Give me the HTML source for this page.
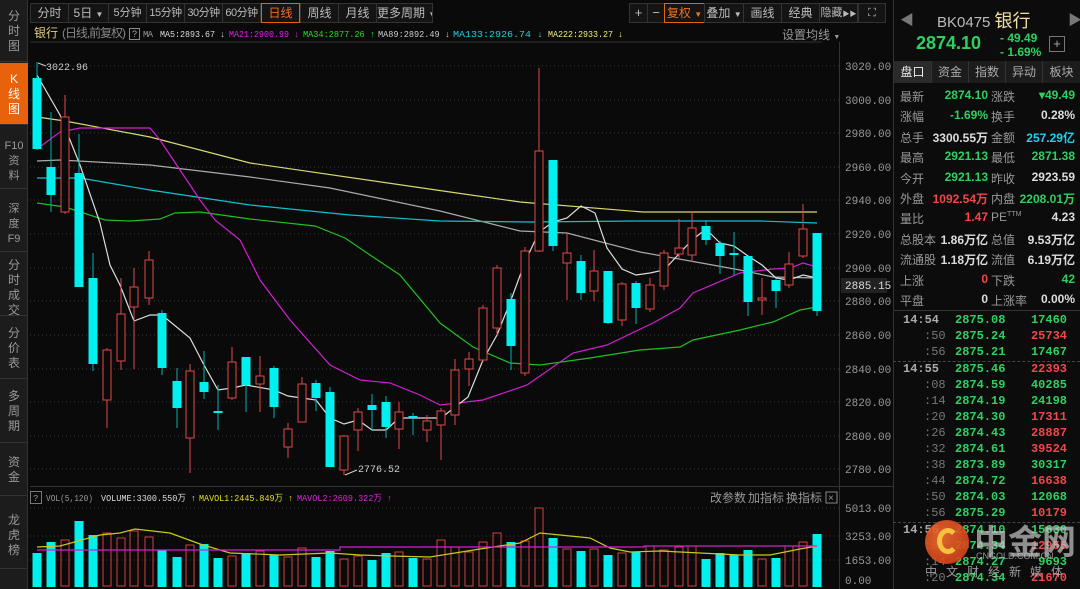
<!DOCTYPE html>
<html><head><meta charset="utf-8"><style>
*{margin:0;padding:0;box-sizing:border-box}
body{width:1080px;height:589px;background:#0a0a0a;overflow:hidden;position:relative;font-family:"Liberation Sans","Noto Sans CJK SC",sans-serif;color:#aaa}
.side{position:absolute;left:0;top:0;width:28px;height:589px;background:#1c1c1c;border-right:1px solid #333}
.side div{position:absolute;left:0;width:28px;text-align:center;font-size:12px;line-height:15px;color:#999;border-bottom:1px solid #333}
.tb{position:absolute;top:3px;height:20px;border:1px solid #333;background:#141414;font-size:11px;line-height:18px;text-align:center;color:#bbb;white-space:nowrap;overflow:hidden}
.rp{position:absolute;left:893px;top:0;width:187px;height:589px;background:#0c0c0c;border-left:1px solid #333}
.row{position:absolute;left:900px;width:175px;font-size:12px;height:20px}
.row span{position:absolute}
.tk{position:absolute;left:897px;width:178px;font-size:12px;font-family:"Liberation Mono",monospace;font-weight:bold}
.tk span{position:absolute}
</style></head><body>
<div class="side">
<div style="top:0;height:62px;padding-top:9px">分<br>时<br>图</div>
<div style="top:63px;height:62px;padding-top:9px;background:#e8620c;color:#fff">K<br>线<br>图</div>
<div style="top:126px;height:63px;padding-top:13px;font-size:11px">F10<br>资<br>料</div>
<div style="top:190px;height:62px;padding-top:12px;font-size:11px">深<br>度<br>F9</div>
<div style="top:253px;height:63px;padding-top:5px">分<br>时<br>成<br>交</div>
<div style="top:317px;height:62px;padding-top:9px">分<br>价<br>表</div>
<div style="top:380px;height:63px;padding-top:9px">多<br>周<br>期</div>
<div style="top:444px;height:52px;padding-top:11px">资<br>金</div>
<div style="top:497px;height:72px;padding-top:16px">龙<br>虎<br>榜</div>
</div>
<div class="tb" style="left:30px;width:39px;font-size:12px">分时</div>
<div class="tb" style="left:68px;width:41px;font-size:12px">5日 <span style="font-size:8px">▼</span></div>
<div class="tb" style="left:108px;width:39px">5分钟</div>
<div class="tb" style="left:146px;width:39px;letter-spacing:-0.5px">15分钟</div>
<div class="tb" style="left:184px;width:39px;letter-spacing:-0.5px">30分钟</div>
<div class="tb" style="left:222px;width:39px;letter-spacing:-0.5px">60分钟</div>
<div class="tb" style="left:261px;width:39px;font-size:12px;border-color:#e8620c;color:#f07020">日线</div>
<div class="tb" style="left:300px;width:39px;font-size:12px">周线</div>
<div class="tb" style="left:338px;width:39px;font-size:12px">月线</div>
<div class="tb" style="left:376px;width:57px;font-size:12px">更多周期 <span style="font-size:8px">▼</span></div>
<div class="tb" style="left:629px;width:19px;font-size:13px">+</div>
<div class="tb" style="left:647px;width:18px;font-size:13px">−</div>
<div class="tb" style="left:664px;width:41px;font-size:12px;border-color:#e8620c;color:#f07020">复权 <span style="font-size:8px">▼</span></div>
<div class="tb" style="left:704px;width:40px;font-size:12px">叠加 <span style="font-size:8px">▼</span></div>
<div class="tb" style="left:743px;width:39px;font-size:12px">画线</div>
<div class="tb" style="left:781px;width:39px;font-size:12px">经典</div>
<div class="tb" style="left:819px;width:39px">隐藏<span style="font-size:7px">▶▶</span></div>
<div class="tb" style="left:858px;width:28px">⛶</div>
<div style="position:absolute;left:782px;top:26px;font-size:12px;color:#999">设置均线 <span style="font-size:7px">▼</span></div>
<svg style="position:absolute;left:0;top:0" width="893" height="589">
<text x="34" y="37" font-size="12" fill="#e0d080" font-family="Liberation Sans,Noto Sans CJK SC">银行</text>
<text x="62" y="37" font-size="12" fill="#888" font-family="Liberation Sans,Noto Sans CJK SC" textLength="64">(日线,前复权)</text>
<rect x="129.5" y="28.5" width="10" height="11" fill="none" stroke="#888"/><text x="132" y="37" font-size="9" fill="#aaa">?</text>
<g font-family="Liberation Mono" font-size="9" lengthAdjust="spacingAndGlyphs">
<text x="143" y="37" fill="#999" textLength="10">MA</text>
<text x="160" y="37" fill="#ddd" textLength="65" lengthAdjust="spacingAndGlyphs">MA5:2893.67 ↓</text>
<text x="229" y="37" fill="#e020e0" textLength="70" lengthAdjust="spacingAndGlyphs">MA21:2900.99 ↓</text>
<text x="303" y="37" fill="#20e020" textLength="72" lengthAdjust="spacingAndGlyphs">MA34:2877.26 ↑</text>
<text x="378" y="37" fill="#ccc" textLength="72" lengthAdjust="spacingAndGlyphs">MA89:2892.49 ↓</text>
<text x="453" y="37" fill="#20d0e0" textLength="90" lengthAdjust="spacingAndGlyphs">MA133:2926.74 ↓</text>
<text x="548" y="37" fill="#f0f080" textLength="75" lengthAdjust="spacingAndGlyphs">MA222:2933.27 ↓</text>
</g>
<line x1="30" y1="42" x2="822" y2="42" stroke="#333"/>
<line x1="839.5" y1="42" x2="839.5" y2="589" stroke="#333"/>
<line x1="30" y1="486.5" x2="893" y2="486.5" stroke="#333"/>
<g stroke="#3a3a3a" stroke-dasharray="1,3">
<line x1="30" y1="66" x2="839" y2="66"/><line x1="30" y1="100" x2="839" y2="100"/><line x1="30" y1="133" x2="839" y2="133"/><line x1="30" y1="167" x2="839" y2="167"/><line x1="30" y1="200" x2="839" y2="200"/><line x1="30" y1="234" x2="839" y2="234"/><line x1="30" y1="268" x2="839" y2="268"/><line x1="30" y1="301" x2="839" y2="301"/><line x1="30" y1="335" x2="839" y2="335"/><line x1="30" y1="369" x2="839" y2="369"/><line x1="30" y1="402" x2="839" y2="402"/><line x1="30" y1="436" x2="839" y2="436"/><line x1="30" y1="469" x2="839" y2="469"/>
<line x1="30" y1="508" x2="839" y2="508"/><line x1="30" y1="536" x2="839" y2="536"/><line x1="30" y1="560" x2="839" y2="560"/>
</g>
<g font-family="Liberation Mono" font-size="11" fill="#999">
<text x="845" y="70">3020.00</text><text x="845" y="104">3000.00</text><text x="845" y="137">2980.00</text><text x="845" y="171">2960.00</text><text x="845" y="204">2940.00</text><text x="845" y="238">2920.00</text><text x="845" y="272">2900.00</text><text x="845" y="305">2880.00</text><text x="845" y="339">2860.00</text><text x="845" y="373">2840.00</text><text x="845" y="406">2820.00</text><text x="845" y="440">2800.00</text><text x="845" y="473">2780.00</text>
<text x="845" y="512">5013.00</text><text x="845" y="540">3253.00</text><text x="845" y="564">1653.00</text><text x="845" y="584">0.00</text>
</g>
<rect x="841" y="278" width="46" height="15" fill="#222"/>
<text x="845" y="289" font-family="Liberation Mono" font-size="11" fill="#ddd">2885.15</text>
<g fill="none" stroke-width="1.2">
<polyline stroke="#d8d870" points="37,117 65,121 150,137 250,163 450,192 520,202 643,212 817,212"/>
<polyline stroke="#aaa" points="37,161 60,160 150,165 250,177 330,188 440,211 520,231 567,233 640,252 707,264 740,270 773,277 817,278"/>
<polyline stroke="#10c0d0" points="37,178 80,178 150,190 250,205 350,215 440,221 530,222 640,221 760,221 817,223"/>
<polyline stroke="#20c020" points="37,203 65,207 105,220 130,221 160,219 175,213 200,212 250,219 315,226 345,238 370,255 400,275 440,323 473,347 510,363 540,365 590,358 640,350 680,347 693,340 740,330 773,322 800,310 817,307"/>
<polyline stroke="#d020d0" points="37,149 60,132 80,128 150,128 160,140 180,170 200,200 215,220 240,240 260,280 290,320 330,365 360,380 390,383 420,395 440,405 483,400 527,385 573,353 607,345 653,323 680,308 693,293 740,273 773,269 790,268 803,263 817,267"/>
<polyline stroke="#ddd" points="37,75 60,115 80,165 100,223 110,265 120,285 134,321 150,315 162,315 190,338 204,365 218,390 232,388 246,385 274,390 288,396 302,398 316,400 330,418 344,424 358,420 372,430 386,430 399,418 413,418 441,418 468,397 483,360 497,335 511,300 525,262 539,232 553,222 567,218 581,206 595,213 607,248 622,269 636,275 650,273 664,270 692,240 706,229 720,243 734,246 748,256 762,265 776,278 789,280 803,275 817,278"/>
</g>
<g id="c"></g>
<text x="46" y="70" font-family="Liberation Mono" font-size="10" fill="#ccc">3022.96</text>
<line x1="38" y1="63" x2="46" y2="66" stroke="#ccc"/>
<text x="358" y="472" font-family="Liberation Mono" font-size="10" fill="#ccc">2776.52</text>
<line x1="345" y1="475" x2="357" y2="470" stroke="#ccc"/>
<g font-size="9" font-family="Liberation Mono">
<rect x="30.5" y="491.5" width="11" height="12" fill="none" stroke="#777"/><text x="33" y="501" fill="#999">?</text>
<text x="46" y="501" fill="#999" textLength="47" lengthAdjust="spacingAndGlyphs">VOL(5,120)</text>
<text x="101" y="501" fill="#ddd" textLength="95" lengthAdjust="spacingAndGlyphs">VOLUME:3300.550万 ↑</text>
<text x="199" y="501" fill="#e0e020" textLength="94" lengthAdjust="spacingAndGlyphs">MAVOL1:2445.849万 ↑</text>
<text x="297" y="501" fill="#e020e0" textLength="95" lengthAdjust="spacingAndGlyphs">MAVOL2:2609.322万 ↑</text>
</g>
<g font-size="12" fill="#999" font-family="Liberation Sans,Noto Sans CJK SC"><text x="710" y="502">改参数</text><text x="748" y="502">加指标</text><text x="786" y="502">换指标</text></g>
<rect x="826" y="492" width="11" height="11" fill="none" stroke="#888"/><text x="828" y="501" font-size="10" fill="#999">×</text>
<g id="v"></g>
<polyline fill="none" stroke="#c8c820" stroke-width="1.2" points="37,547 60,546 100,535 120,533 135,529 170,533 200,544 230,553 280,555 330,553 360,555 390,556 430,557 480,549 520,543 540,533 560,535 590,538 610,548 630,552 660,551 700,553 740,555 770,555 800,549 817,546"/>
<polyline fill="none" stroke="#d020d0" stroke-width="1.2" points="37,550 340,550 340,547 644,547 644,546 817,546"/>
</svg>
<div class="rp"></div>
<div style="position:absolute;left:900px;top:10px;font-size:14px;color:#777">◀</div>
<div style="position:absolute;left:1068px;top:10px;font-size:14px;color:#777">▶</div>
<div style="position:absolute;left:937px;top:7px;font-size:15px;color:#bbb">BK0475 <span style="color:#f0e0a0;font-size:18px">银行</span></div>
<div style="position:absolute;left:916px;top:33px;font-size:18px;font-weight:bold;color:#30d060">2874.10</div>
<div style="position:absolute;left:1000px;top:31px;font-size:12px;font-weight:bold;color:#30d060;line-height:14px">- 49.49<br>- 1.69%</div>
<div style="position:absolute;left:1049px;top:36px;width:16px;height:16px;border:1px solid #777;color:#aaa;font-size:13px;line-height:13px;text-align:center">+</div>
<div style="position:absolute;left:894px;top:61px;width:186px;height:22px;background:#1c1c1c;font-size:12px;color:#aaa;line-height:22px">
<span style="position:absolute;left:0;width:37px;text-align:center;background:#2a2a2a;color:#eee">盘口</span><span style="position:absolute;left:37px;width:37px;text-align:center;border-left:1px solid #333">资金</span><span style="position:absolute;left:74px;width:37px;text-align:center;border-left:1px solid #333">指数</span><span style="position:absolute;left:111px;width:37px;text-align:center;border-left:1px solid #333">异动</span><span style="position:absolute;left:148px;width:38px;text-align:center;border-left:1px solid #333">板块</span></div>
<div id="rows"></div>
<div style="position:absolute;left:893px;top:310px;width:187px;border-top:1px solid #333"></div>
<div id="ticks"></div>
<div style="position:absolute;left:925px;top:520px;width:44px;height:44px;border-radius:50%;background:radial-gradient(circle at 40% 40%,#f07030,#d03010);opacity:.9"></div>
<div style="position:absolute;left:937px;top:528px;width:22px;height:26px;border-radius:50%;border:5px solid #f8c040;border-right-color:transparent"></div>
<div style="position:absolute;left:974px;top:515px;font-size:34px;font-weight:bold;color:rgba(200,200,200,.7)">中金网</div>
<div style="position:absolute;left:976px;top:551px;font-size:9px;color:rgba(200,200,200,.7)">CNGOLD.COM.CN</div>
<div style="position:absolute;left:925px;top:563px;font-size:12px;letter-spacing:9px;color:rgba(200,200,200,.75)">中文财经新媒体</div>
<script>
var C=[[37,'c',78,149,62,150],[51,'c',167,195,112,212],[65,'r',117,212,95,214],[79,'c',173,287,134,287],[93,'c',278,364,253,371],[107,'r',350,400,348,428],[121,'r',314,361,278,370],[134,'r',287,307,268,369],[149,'r',260,298,251,305],[162,'c',313,368,310,375],[177,'c',381,408,368,428],[190,'r',371,438,364,473],[204,'c',382,392,351,399],[218,'c',411,413,385,430],[232,'r',362,398,347,400],[246,'c',357,385,357,412],[260,'r',376,384,356,412],[274,'c',368,407,366,418],[288,'r',429,447,423,458],[302,'r',384,422,377,422],[316,'c',383,398,380,411],[330,'c',392,467,387,467],[344,'r',436,470,435,475],[358,'r',412,430,408,451],[372,'c',405,410,394,431],[386,'c',402,427,396,438],[399,'r',412,429,402,449],[413,'c',416,418,413,435],[427,'r',421,430,415,442],[441,'r',411,425,408,460],[455,'r',370,415,359,425],[469,'r',359,369,352,386],[483,'r',308,360,305,362],[497,'r',268,328,265,335],[511,'c',299,346,293,370],[525,'r',251,373,247,376],[539,'r',151,251,68,252],[553,'c',160,246,160,251],[567,'r',253,263,233,300],[581,'c',261,293,255,300],[594,'r',271,291,250,301],[608,'c',271,323,271,324],[622,'r',284,320,282,326],[636,'c',283,308,281,324],[650,'r',285,309,278,312],[664,'r',253,286,250,290],[679,'r',248,254,219,258],[692,'r',228,255,211,262],[706,'c',226,240,220,245],[720,'c',243,256,241,274],[734,'c',253,255,232,275],[748,'c',256,302,256,316],[762,'r',298,300,278,315],[776,'c',280,291,279,308],[789,'r',264,285,252,288],[803,'r',229,256,204,258],[817,'c',233,311,233,316]];
var V=[553,542,540,521,535,533,538,531,537,550,557,545,544,558,556,553,551,555,557,548,557,551,559,556,560,553,552,558,559,540,547,552,542,533,542,541,508,538,549,551,549,555,553,552,546,550,547,546,559,553,555,550,559,558,546,542,534];
var s='',v='';
C.forEach(function(k,i){var x=k[0],red=k[1]=='r',col=red?'#e04848':'#00f0f0';
s+='<line x1="'+x+'" y1="'+k[4]+'" x2="'+x+'" y2="'+k[5]+'" stroke="'+(red?col:'#00b0b0')+'"/>';
var h=Math.max(k[3]-k[2],1.5);
s+=red?'<rect x="'+(x-4)+'" y="'+k[2]+'" width="8" height="'+h+'" fill="#0a0a0a" stroke="'+col+'"/>':'<rect x="'+(x-4.5)+'" y="'+k[2]+'" width="9" height="'+h+'" fill="'+col+'"/>';
var t=V[i];
v+=red?'<rect x="'+(x-4)+'" y="'+t+'" width="8" height="'+(586-t)+'" fill="none" stroke="#d04040"/>':'<rect x="'+(x-4.5)+'" y="'+t+'" width="9" height="'+(587-t)+'" fill="#00f0f0"/>';});
document.getElementById('c').innerHTML=s;document.getElementById('v').innerHTML=v;
var G='#30d060',R='#f04848',W='#ddd',B='#20d0f0';
var rows=[['最新','2874.10',G,'涨跌','▾49.49',G],['涨幅','-1.69%',G,'换手','0.28%',W],['总手','3300.55万',W,'金额','257.29亿',B],['最高','2921.13',G,'最低','2871.38',G],['今开','2921.13',G,'昨收','2923.59',W],['外盘','1092.54万',R,'内盘','2208.01万',G],['量比','1.47',R,'PE<sup style="font-size:7px">TTM</sup>','4.23',W],['总股本','1.86万亿',W,'总值','9.53万亿',W],['流通股','1.18万亿',W,'流值','6.19万亿',W],['上涨','0',R,'下跌','42',G],['平盘','0',W,'上涨率','0.00%',W]];
var h='';rows.forEach(function(r,i){var y=88+i*20.4;h+='<div class="row" style="top:'+y+'px"><span style="left:0;color:#999">'+r[0]+'</span><span style="right:87px;color:'+r[2]+';font-weight:bold">'+r[1]+'</span><span style="left:91px;color:#999">'+r[3]+'</span><span style="right:0;color:'+r[5]+';font-weight:bold">'+r[4]+'</span></div>';});
document.getElementById('rows').innerHTML=h;
var T=[['14:54','2875.08','17460',G],[':50','2875.24','25734',R],[':56','2875.21','17467',G],['14:55','2875.46','22393',R],[':08','2874.59','40285',G],[':14','2874.19','24198',G],[':20','2874.30','17311',R],[':26','2874.43','28887',R],[':32','2874.61','39524',R],[':38','2873.89','30317',G],[':44','2874.72','16638',R],[':50','2874.03','12068',G],[':56','2875.29','10179',R],['14:56','2874.10','15630',G],[':02','2874.34','12955',R],[':14','2874.27','9693',G],[':20','2874.34','21670',R]];
var t='';T.forEach(function(r,i){var y=313+i*16+(i>=3?1:0)+(i>=13?1:0);var big=r[0].length>3;
t+='<div class="tk" style="top:'+y+'px;height:16px"><span style="left:'+(big?6:27)+'px;color:'+(big?'#aaa':'#777')+';font-weight:'+(big?'bold':'normal')+'">'+r[0]+'</span><span style="left:58px;color:#30d060">'+r[1]+'</span><span style="right:8px;color:'+r[3]+'">'+r[2]+'</span></div>';});
t+='<div style="position:absolute;left:893px;top:361px;width:187px;border-top:1px dashed #444"></div><div style="position:absolute;left:893px;top:522px;width:187px;border-top:1px dashed #444"></div>';
document.getElementById('ticks').innerHTML=t;
</script>
</body></html>
